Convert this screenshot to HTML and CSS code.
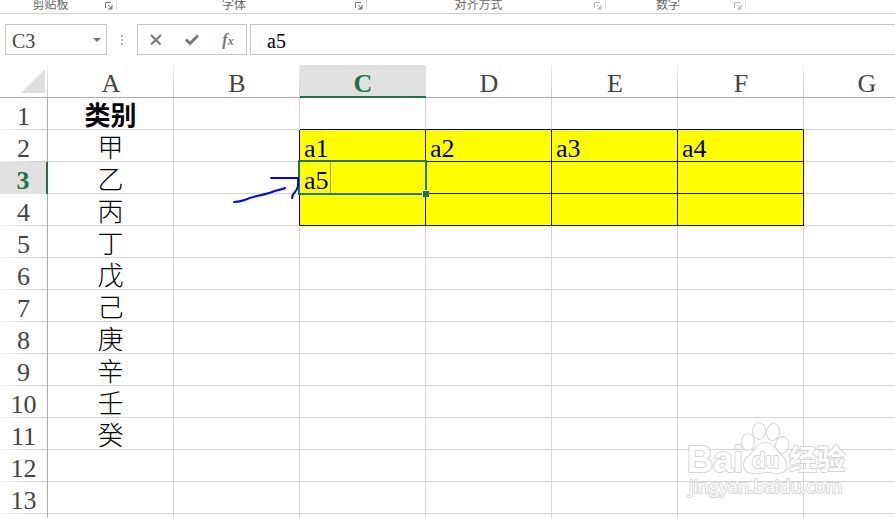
FILE: index.html
```html
<!DOCTYPE html>
<html lang="zh-CN">
<head>
    <meta charset="UTF-8">
    <meta name="viewport" content="width=device-width, initial-scale=1.0">
    <title>Sheet</title>
    <link rel="stylesheet" href="styles.css">
</head>
<body>

    <!-- Ribbon group labels -->
    <div class="ribbon">
        <div class="group group-clipboard">
            <span class="group-name">剪贴板</span>
            <button class="launcher" aria-label="剪贴板"><svg width="8" height="8" viewBox="0 0 8 8"><path d="M.5 6V.5H6M3 3l3 3M7 3v4H3" /><path class="tip" d="M7 4v3H4z" /></svg></button>
        </div>
        <div class="group group-font">
            <span class="group-name">字体</span>
            <button class="launcher" aria-label="字体"><svg width="8" height="8" viewBox="0 0 8 8"><path d="M.5 6V.5H6M3 3l3 3M7 3v4H3" /><path class="tip" d="M7 4v3H4z" /></svg></button>
        </div>
        <div class="group group-align">
            <span class="group-name">对齐方式</span>
            <button class="launcher" aria-label="对齐方式" disabled><svg width="8" height="8" viewBox="0 0 8 8"><path d="M.5 6V.5H6M3 3l3 3M7 3v4H3" /><path class="tip" d="M7 4v3H4z" /></svg></button>
        </div>
        <div class="group group-number">
            <span class="group-name">数字</span>
            <button class="launcher" aria-label="数字" disabled><svg width="8" height="8" viewBox="0 0 8 8"><path d="M.5 6V.5H6M3 3l3 3M7 3v4H3" /><path class="tip" d="M7 4v3H4z" /></svg></button>
        </div>
    </div>

    <!-- Formula bar -->
    <div class="formula-bar">
        <div class="name-box">
            <input type="text" value="C3" aria-label="名称框">
            <button aria-label="打开名称框"><svg width="8" height="4" viewBox="0 0 8 4"><path d="M0 0h8L4 4z" fill="#777" /></svg></button>
        </div>
        <div class="dots"><i></i><i></i><i></i></div>
        <div class="formula-actions">
            <button aria-label="取消"><svg width="16" height="16" viewBox="0 0 16 16"><path d="M3 3L12.500 12.500M13 3L3 12.500" stroke="#777" stroke-width="2" fill="none" /></svg></button>
            <button aria-label="输入"><svg width="16" height="16" viewBox="0 0 16 16"><path d="M2 7.500L6 11.500L14 3.500" stroke="#777" stroke-width="2.800" fill="none" /></svg></button>
            <button class="fx" aria-label="插入函数">f<sub>x</sub></button>
        </div>
        <input class="formula" type="text" value="a5" aria-label="编辑栏">
    </div>

    <!-- Worksheet -->
    <div class="sheet">
        <table class="grid">
            <thead>
                <tr>
                    <th class="corner"><svg width="24" height="24" viewBox="0 0 24 24"><path d="M24 0v24H0z" fill="#dfdfdf" /></svg></th>
                    <th>A</th><th>B</th><th class="selected">C</th><th>D</th><th>E</th><th>F</th><th>G</th>
                </tr>
            </thead>
            <tbody>
                <tr class="above"><th>1</th><td class="title">类别</td><td></td><td></td><td></td><td></td><td></td><td></td></tr>
                <tr class="marked"><th>2</th><td>甲</td><td></td><td>a1</td><td>a2</td><td>a3</td><td>a4</td><td></td></tr>
                <tr class="marked">
                    <th class="selected">3</th><td>乙</td><td></td>
                    <td class="active"><input type="text" value="a5" aria-label="C3"><span class="outline"></span><span class="handle"></span></td>
                    <td></td><td></td><td></td><td></td>
                </tr>
                <tr class="marked"><th>4</th><td>丙</td><td></td><td></td><td></td><td></td><td></td><td></td></tr>
                <tr><th>5</th><td>丁</td><td></td><td></td><td></td><td></td><td></td><td></td></tr>
                <tr><th>6</th><td>戊</td><td></td><td></td><td></td><td></td><td></td><td></td></tr>
                <tr><th>7</th><td>己</td><td></td><td></td><td></td><td></td><td></td><td></td></tr>
                <tr><th>8</th><td>庚</td><td></td><td></td><td></td><td></td><td></td><td></td></tr>
                <tr><th>9</th><td>辛</td><td></td><td></td><td></td><td></td><td></td><td></td></tr>
                <tr><th>10</th><td>壬</td><td></td><td></td><td></td><td></td><td></td><td></td></tr>
                <tr><th>11</th><td>癸</td><td></td><td></td><td></td><td></td><td></td><td></td></tr>
                <tr><th>12</th><td></td><td></td><td></td><td></td><td></td><td></td><td></td></tr>
                <tr><th>13</th><td></td><td></td><td></td><td></td><td></td><td></td><td></td></tr>
                <tr><th></th><td></td><td></td><td></td><td></td><td></td><td></td><td></td></tr>
            </tbody>
        </table>

        <!-- Pen arrow pointing at C3 -->
        <svg class="pen-arrow" width="70" height="30" viewBox="0 0 70 30">
            <path d="M2 27C7 27 10 26 14 24.500C22 21 32 20 40 17C45 15 49 15 53 13M39 3H66C66 9 67 12 63 17C61 19 60 21 60 23" />
        </svg>

        <!-- Watermark -->
        <svg class="watermark" width="164" height="84" viewBox="0 0 164 84">
            <ellipse cx="61" cy="22" rx="6" ry="8" />
            <ellipse cx="72" cy="11" rx="6" ry="8" />
            <ellipse cx="86" cy="12" rx="6" ry="8" transform="rotate(10 86 12)" />
            <ellipse cx="95" cy="25" rx="6" ry="8" transform="rotate(12 95 25)" />
            <path d="M78 23C70 23 68 31 62 36C54 42 56 53 66 53C73 54 75 52 80 52C86 52 90 54 95 52C102 50 100 41 95 36C89 31 87 23 78 23Z" />
            <text class="brand" x="0" y="52">Bai</text>
            <text class="du" x="65" y="48">du</text>
            <text class="cn" x="102" y="50">经验</text>
            <text class="url" x="2" y="73">jingyan.baidu.com</text>
        </svg>
    </div>

</body>
</html>
```
FILE: styles.css
```css
* {
    box-sizing: border-box;
}
body {
    margin: 0;
    height: 100vh;
    display: flex;
    flex-direction: column;
    overflow: hidden;
    background-color: #fff;
    font-family: "Liberation Serif", "Noto Sans CJK SC", serif;
    color: #000;
}
button, input {
    font: inherit;
    color: inherit;
    background: none;
    border: none;
    padding: 0;
    outline: none;
}

/* Ribbon */
.ribbon {
    display: flex;
    flex: none;
    height: 14px;
    overflow: hidden;
    border-bottom: 1px solid #d2d2d2;
    font-family: "Noto Sans CJK SC", sans-serif;
    font-size: 12px;
    line-height: 18px;
    color: #666;
}
.group {
    display: flex;
    flex: none;
    height: 9px;
    align-items: flex-end;
    border-right: 1px solid #dcdcdc;
}
.group-clipboard {
    width: 117px;
}
.group-font {
    width: 250px;
}
.group-align {
    width: 239px;
}
.group-number {
    width: 140px;
}
.group-name {
    flex: 1;
    text-align: center;
    margin-bottom: -4px;
}
.launcher {
    width: 15px;
    height: 7px;
    overflow: visible;
    text-align: left;
}
.launcher svg {
    display: block;
    overflow: visible;
    margin-left: 4px;
}
.launcher path {
    fill: none;
    stroke: #777;
}
.launcher .tip {
    fill: #777;
    stroke: none;
}
.launcher:disabled {
    opacity: 0.5;
}

/* Formula bar */
.formula-bar {
    display: flex;
    flex: none;
    height: 51px;
    padding: 10px 0 10px 5px;
    font-size: 20px;
    color: #444;
}
.name-box {
    display: flex;
    width: 102px;
    border: 1px solid #c6c6c6;
}
.name-box input {
    flex: 1;
    min-width: 0;
    padding: 3px 0 0 6px;
}
.name-box button {
    display: flex;
    align-items: center;
    justify-content: center;
    width: 18px;
}
.dots {
    display: flex;
    flex-direction: column;
    align-items: center;
    justify-content: center;
    gap: 2px;
    width: 30px;
}
.dots i {
    width: 2px;
    height: 2px;
    background-color: #b4b4b4;
}
.formula-actions {
    display: flex;
    width: 110px;
    border: 1px solid #c6c6c6;
}
.formula-actions button {
    display: flex;
    flex: 1;
    align-items: center;
    justify-content: center;
}
.formula-actions .fx {
    font-size: 16px;
    font-style: italic;
    font-weight: bold;
    color: #777;
}
.fx sub {
    font-size: 12px;
    line-height: 8px;
    align-self: center;
    padding-top: 3px;
}
.formula {
    flex: 1;
    min-width: 0;
    margin-left: 3px;
    padding: 3px 0 0 16px;
    border: 1px solid #c6c6c6;
    border-right: none;
    color: #000;
}

/* Worksheet */
.sheet {
    position: relative;
    flex: 1;
    min-height: 0;
    overflow: hidden;
}
.grid {
    width: 930px;
    table-layout: fixed;
    border-collapse: separate;
    border-spacing: 0;
    font-size: 26px;
    line-height: 24px;
}
.grid th, .grid td {
    width: 126px;
    height: 32px;
    padding: 7px 0 0;
    border-right: 1px solid #d4d4d4;
    border-bottom: 1px solid #d4d4d4;
    overflow: hidden;
    white-space: nowrap;
}
.grid th {
    padding-top: 6px;
    font-weight: normal;
    color: #444;
}
.grid thead th {
    height: 33px;
    border-right: none;
    border-bottom-color: #ababab;
    background: linear-gradient(#f0f0f0, #c8c8c8) right / 1px 100% no-repeat;
}
.grid thead .corner {
    width: 48px;
    padding: 0 3px 0 0;
    text-align: right;
}
.corner svg {
    display: block;
    margin-left: auto;
}
.grid tbody th {
    border-right-color: #ababab;
    border-bottom: none;
    background: linear-gradient(to right, #f4f4f4, #c8c8c8) bottom / 100% 1px no-repeat;
}
.grid thead .selected {
    border-bottom: 2px solid #217346;
    background: #e1e1e1;
    font-weight: bold;
    color: #217346;
}
.grid tbody .selected {
    border-right: 2px solid #217346;
    background: #e1e1e1;
    font-weight: bold;
    color: #217346;
}
.grid td:nth-child(2) {
    text-align: center;
    font-weight: 300;
}
.grid td.title {
    font-weight: bold;
}

/* Yellow range C2:F4 */
.above td:nth-child(n+4):nth-child(-n+7) {
    border-bottom-color: #000;
}
.marked td:nth-child(3) {
    border-right-color: #000;
}
.marked td:nth-child(n+4):nth-child(-n+7) {
    padding-left: 4px;
    border-color: #000;
    background-color: #ff0;
}
.grid .active {
    position: relative;
    padding-top: 0;
    overflow: visible;
}
.active input {
    display: block;
    width: 27px;
    height: 31px;
    padding-top: 6px;
    border-right: 1px solid #a0a03c;
}
.outline {
    position: absolute;
    inset: -2px;
    border: 2px solid #217346;
    pointer-events: none;
}
.handle {
    position: absolute;
    right: -4px;
    bottom: -4px;
    width: 7px;
    height: 7px;
    border-top: 1px solid #fff;
    border-left: 1px solid #fff;
    background-color: #217346;
}

/* Drawings over the cells */
.pen-arrow {
    position: absolute;
    left: 232px;
    top: 110px;
    fill: none;
    stroke: #00f;
    stroke-width: 2;
    stroke-linecap: round;
}
.watermark {
    position: absolute;
    left: 687px;
    top: 355px;
    overflow: visible;
    fill: #fff;
    stroke: #d2d2d2;
    stroke-width: 2;
    stroke-linejoin: round;
    paint-order: stroke;
    opacity: 0.9;
    font-family: "Liberation Sans", "Noto Sans CJK SC", sans-serif;
}
.brand {
    font-size: 36px;
    font-weight: bold;
}
.du {
    font-size: 22px;
    font-weight: bold;
}
.cn {
    font-family: "Noto Sans CJK SC", sans-serif;
    font-size: 28px;
    font-weight: bold;
}
.url {
    font-family: "Open Sans", sans-serif;
    font-size: 18px;
    font-weight: normal;
}
```
